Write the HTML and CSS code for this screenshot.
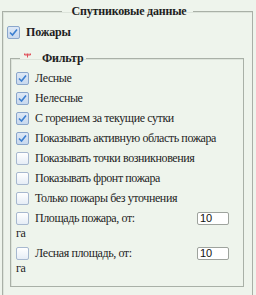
FILE: index.html
```html
<html>

<head>
  <link rel="stylesheet" href="styles.css">
</head>

<body>
  <fieldset class="panel">
    <legend class="panel-title">Спутниковые данные</legend>

    <label class="row main">
      <span class="box checked">
        <svg width="11" height="11" viewBox="0 0 11 11"><path d="M2 5.5 L4.5 8 L9 2.5" fill="none" stroke="#3b7fd0" stroke-width="1.6"/></svg>
      </span>
      <span>Пожары</span>
    </label>

    <fieldset class="filter">
      <legend class="filter-title">
        <svg class="filter-icon" width="7" height="5" viewBox="0 0 7 5"><path d="M0.5 0.5 V2 H6.5 V0.5 M3.5 0.5 V4.5 M2 0.5 V2 M5 0.5 V2" fill="none" stroke="#e0505a" stroke-width="1"/></svg>
        <span>Фильтр</span>
      </legend>

      <label class="row">
        <span class="box checked">
          <svg width="11" height="11" viewBox="0 0 11 11"><path d="M2 5.5 L4.5 8 L9 2.5" fill="none" stroke="#3b7fd0" stroke-width="1.6"/></svg>
        </span>
        <span>Лесные</span>
      </label>
      <label class="row">
        <span class="box checked">
          <svg width="11" height="11" viewBox="0 0 11 11"><path d="M2 5.5 L4.5 8 L9 2.5" fill="none" stroke="#3b7fd0" stroke-width="1.6"/></svg>
        </span>
        <span>Нелесные</span>
      </label>
      <label class="row">
        <span class="box checked">
          <svg width="11" height="11" viewBox="0 0 11 11"><path d="M2 5.5 L4.5 8 L9 2.5" fill="none" stroke="#3b7fd0" stroke-width="1.6"/></svg>
        </span>
        <span>С горением за текущие сутки</span>
      </label>
      <label class="row">
        <span class="box checked">
          <svg width="11" height="11" viewBox="0 0 11 11"><path d="M2 5.5 L4.5 8 L9 2.5" fill="none" stroke="#3b7fd0" stroke-width="1.6"/></svg>
        </span>
        <span>Показывать активную область пожара</span>
      </label>
      <label class="row">
        <span class="box"></span>
        <span>Показывать точки возникновения</span>
      </label>
      <label class="row">
        <span class="box"></span>
        <span>Показывать фронт пожара</span>
      </label>
      <label class="row">
        <span class="box"></span>
        <span>Только пожары без уточнения</span>
      </label>

      <div class="area">
        <label class="row">
          <span class="box"></span>
          <span class="area-label">Площадь пожара, от:</span>
        </label>
        <input class="num" type="text" value="10">
        <span class="unit">га</span>
      </div>
      <div class="area">
        <label class="row">
          <span class="box"></span>
          <span class="area-label">Лесная площадь, от:</span>
        </label>
        <input class="num" type="text" value="10">
        <span class="unit">га</span>
      </div>
    </fieldset>
  </fieldset>
</body>

</html>
```
FILE: styles.css
```css
body {
  margin: 0;
  padding-top: 4px;
  background: #eef4ec;
  font-family: "Liberation Serif", "Times New Roman", serif;
  font-size: 12px;
  letter-spacing: -0.4px;
  color: #1e1e1e;
}

.panel {
  margin: 0 3px 0 2px;
  padding: 2px 4px 20px 4px;
  border: 1px solid #a9b0a7;
  box-shadow: inset 1px 1px 0 #dde4db;
}

.panel-title {
  margin: 0 auto;
  padding: 0 7px 0 10px;
  font-weight: bold;
  letter-spacing: -0.2px;
  line-height: 15px;
}

.row {
  display: flex;
  align-items: center;
  gap: 6px;
  height: 20px;
  white-space: nowrap;
}

.main {
  height: 22px;
  font-weight: bold;
  letter-spacing: -0.2px;
}

.box {
  box-sizing: border-box;
  width: 13px;
  height: 13px;
  flex: none;
  display: flex;
  align-items: center;
  justify-content: center;
  border: 1px solid #a7b8cf;
  border-radius: 2px;
  background: linear-gradient(#ffffff, #e6edf6);
}

.box.checked {
  border-color: #8aa6cb;
  background: linear-gradient(#dde8f6, #c9d9ee);
}

.filter {
  margin: 8px 4px 0 3px;
  padding: 2px 4px 8px 5px;
  border: 1px solid #a9b0a7;
  box-shadow: inset 1px 1px 0 #dde4db;
}

.filter-title {
  margin-left: 4px;
  padding: 0 3px 0 4px;
  font-weight: bold;
  letter-spacing: -0.2px;
  line-height: 15px;
  display: flex;
  align-items: center;
  gap: 11px;
}

.filter-icon {
  margin-top: -6px;
}

.area {
  display: flex;
  flex-wrap: wrap;
  align-items: center;
}

.area-label {
  width: 162px;
}

.num {
  box-sizing: border-box;
  width: 32px;
  height: 13px;
  padding: 0 2px;
  border: 1px solid #9ea39d;
  border-radius: 2px;
  background: #ffffff;
  font-family: "Liberation Sans", Arial, sans-serif;
  font-size: 11px;
  letter-spacing: 0;
  color: #111;
}

.unit {
  width: 100%;
  height: 15px;
  line-height: 11px;
}
```
